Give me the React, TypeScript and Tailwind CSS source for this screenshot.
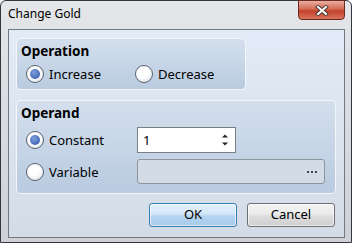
import React from 'react';

const font = { fontFamily: '"Noto Sans", "Open Sans", sans-serif' };

function Radio({ checked = false }: { checked?: boolean }) {
  return (
    <span className="flex h-[18px] w-[18px] shrink-0 items-center justify-center rounded-full border border-[#58636f] bg-[radial-gradient(circle_at_40%_35%,#ffffff_40%,#d9dee4)]">
      {checked && (
        <span className="h-[10px] w-[10px] rounded-full bg-[radial-gradient(circle_at_40%_35%,#7f9fdf,#2d52a6)]" />
      )}
    </span>
  );
}

function Option({ label, checked, width }: { label: string; checked?: boolean; width: string }) {
  return (
    <div className={`flex items-center gap-[5px] ${width}`}>
      <Radio checked={checked} />
      <span className="text-[13px] leading-[18px] text-black">{label}</span>
    </div>
  );
}

function Group({ title, className, children }: { title: string; className: string; children: React.ReactNode }) {
  return (
    <div
      className={`rounded-[5px] border border-[#f2f6fb] bg-[linear-gradient(180deg,#d4dfed,#b9cbe0)] pl-[4px] pt-[3px] ${className}`}
    >
      <div className="text-[13.5px] font-bold leading-[18px] text-black">{title}</div>
      {children}
    </div>
  );
}

export default function App() {
  return (
    <div className="h-[245px] w-[352px] bg-white" style={font}>
      <div className="relative flex h-[243px] w-[352px] flex-col rounded-t-[6px] border border-[#33373d] bg-[linear-gradient(180deg,#e4e6e9,#cdd1d6)]">
        {/* title bar */}
        <div className="flex h-[28px] items-center pl-[7px] pb-[2px] text-[12px] text-black">Change Gold</div>
        <div className="absolute right-[6px] top-[-1px] flex h-[20px] w-[47px] items-center justify-center rounded-b-[4px] border border-[#6b2a1f] bg-[linear-gradient(180deg,#e9ada2_0%,#d46a52_45%,#c2402a_55%,#d9755c_100%)]">
          <svg width="14" height="11" viewBox="0 0 14 11">
            <path d="M3 2 L11 9 M11 2 L3 9" stroke="#4a3a36" strokeWidth="4" strokeLinecap="square" />
            <path d="M3 2 L11 9 M11 2 L3 9" stroke="#ffffff" strokeWidth="2" strokeLinecap="square" />
          </svg>
        </div>

        {/* client area */}
        <div className="ml-[7px] flex h-[209px] w-[337px] flex-col border border-[#6f7883] bg-[linear-gradient(180deg,#e2ecf8,#d3dce6)]">
          <Group title="Operation" className="ml-[7px] mt-[8px] h-[52px] w-[230px]">
            <div className="ml-[5px] mt-[5px] flex">
              <Option label="Increase" checked width="w-[109px]" />
              <Option label="Decrease" width="w-[100px]" />
            </div>
          </Group>

          <Group title="Operand" className="ml-[7px] mt-[10px] h-[94px] w-[320px]">
            <div className="ml-[5px] mt-[5px] flex h-[26px] items-center">
              <Option label="Constant" checked width="w-[111px]" />
              <div className="flex h-[26px] w-[99px] items-center justify-between border border-[#7a7f86] bg-white pl-[5px] pr-[6px]">
                <span className="text-[13px] leading-[18px] text-black">1</span>
                <svg width="8" height="16" viewBox="0 0 8 16">
                  <path d="M1 5.5 L4 2.5 L7 5.5 Z" fill="#222" />
                  <path d="M1 10.5 L4 13.5 L7 10.5 Z" fill="#222" />
                </svg>
              </div>
            </div>
            <div className="ml-[5px] mt-[6px] flex h-[25px] items-center">
              <Option label="Variable" width="w-[111px]" />
              <div className="flex h-[25px] w-[188px] items-center justify-end gap-[2px] rounded-[3px] border border-[#8c949e] bg-[#d3dce6] pr-[7px]">
                <span className="h-[2px] w-[2px] bg-[#444]" />
                <span className="h-[2px] w-[2px] bg-[#444]" />
                <span className="h-[2px] w-[2px] bg-[#444]" />
              </div>
            </div>
          </Group>

          <div className="mt-[9px] flex gap-[10px] pl-[140px]">
            <button className="h-[24px] w-[88px] rounded-[3px] border border-[#3c7fb1] bg-[linear-gradient(180deg,#e6f1fb_0%,#d3e6f8_45%,#b5d4f1_55%,#a7cbea_100%)] text-[13px] text-black shadow-[inset_0_0_0_1px_rgba(255,255,255,0.6)]">
              OK
            </button>
            <button className="h-[24px] w-[88px] rounded-[3px] border border-[#707070] bg-[linear-gradient(180deg,#f3f3f3_0%,#ebebeb_45%,#dddddd_55%,#cfcfcf_100%)] text-[13px] text-black shadow-[inset_0_0_0_1px_rgba(255,255,255,0.6)]">
              Cancel
            </button>
          </div>
        </div>
      </div>
    </div>
  );
}
